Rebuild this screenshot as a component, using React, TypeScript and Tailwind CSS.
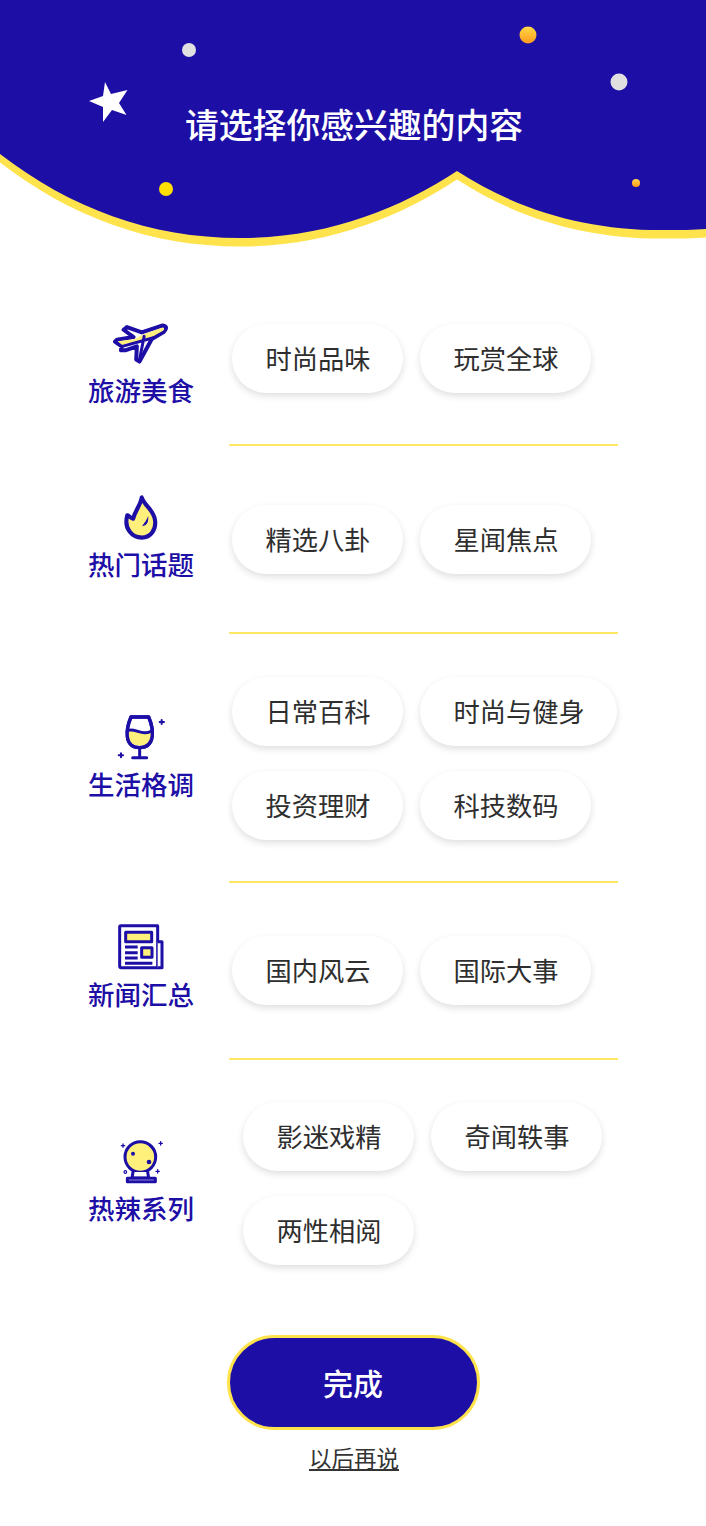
const BLUE = "#1d0ea6";
const YEL = "#fff07c";
const FONT = "font-['Roboto','Noto_Sans_CJK_SC',sans-serif]";

function Plane() {
  return (
    <svg width="57" height="44" viewBox="98 35 172 130" fill="none" stroke={BLUE} strokeWidth="12" strokeLinejoin="round" strokeLinecap="round">
      <path d="M248 47L185 68L140 52L130 60L160 82L110 90L104 96L124 110L122 122L135 122L170 110L168 150L178 156L215 88L252 66Q266 50 248 47Z" fill="#fff" />
      <path d="M246 54L187 75L165 88L112 95L126 106L215 82L250 62Q256 54 246 54Z" fill={YEL} stroke="none" />
      <path d="M126 110L220 84M192 80L178 150" strokeWidth="9" />
    </svg>
  );
}
function Flame() {
  return (
    <svg width="36" height="46" viewBox="133 28 104 134" fill="none" stroke={BLUE} strokeWidth="12" strokeLinejoin="round">
      <path d="M187 38C184 60 168 76 162 100C155 98 150 92 145 90C134 130 160 155 187 155C215 155 229 130 226 105C223 75 197 65 187 38Z" fill={YEL} />
      <path d="M206 92C207 106 205 120 188 122C195 112 201 105 206 92Z" fill={BLUE} stroke="none" />
    </svg>
  );
}
function Glass() {
  return (
    <svg width="48" height="46" viewBox="108 36 144 138" fill="none" stroke={BLUE} strokeWidth="10" strokeLinecap="round" strokeLinejoin="round">
      <path d="M150 45H203C218 80 225 136 176 137C127 136 135 80 150 45Z" fill="#fff" />
      <path d="M142 88C165 80 185 106 212 88C218 118 202 131 176 131C150 131 138 115 142 88Z" fill={YEL} stroke="none" />
      <path d="M150 45H203C218 80 225 136 176 137C127 136 135 80 150 45Z" />
      <path d="M141 85C165 78 185 104 213 86M176 137V165M155 167H197" strokeWidth="9" />
      <path d="M236 60H249M242 54V66M113 160H126M120 154V166" strokeWidth="6" />
    </svg>
  );
}
function News() {
  return (
    <svg width="46" height="46" viewBox="113 26 138 136" fill="none" stroke={BLUE} strokeWidth="9" strokeLinejoin="round">
      <path d="M118 34Q118 30 122 30H232V156H122Q118 156 118 152Z" fill="#fff" />
      <path d="M232 78H245V156H232" fill="#fff" />
      <rect x="136" y="50" width="78" height="28" fill={YEL} />
      <rect x="184" y="96" width="31" height="29" fill={YEL} />
      <path d="M134 94H172M134 111H172M134 127H172M134 143H216" />
    </svg>
  );
}
function Ball() {
  return (
    <svg width="46" height="46" viewBox="110 26 138 136" fill="none" stroke={BLUE} strokeWidth="9" strokeLinejoin="round" strokeLinecap="round">
      <circle cx="177" cy="82" r="46" fill={YEL} />
      <path d="M155 127L152 145H202L199 127" fill="#fff" />
      <path d="M138 146H222V156H138Z" fill="#fff" />
      <circle cx="155" cy="72" r="6" fill={BLUE} stroke="none" />
      <circle cx="203" cy="97" r="7" fill={BLUE} stroke="none" />
      <path d="M204 48L217 62" strokeWidth="4" />
      <path d="M120 48H130M125 43V53M233 41H243M238 36V46M224 125H234M229 120V130" strokeWidth="4" />
      <circle cx="132" cy="127" r="4" strokeWidth="3.5" />
    </svg>
  );
}

function Chip({ text }: { text: string }) {
  return (
    <div className="h-[69px] pt-[5px] pl-[33.5px] pr-[32.5px] rounded-full bg-white shadow-[0_3px_7px_rgba(0,0,0,0.13)] flex items-center text-[26.25px] text-[#2e2e2e] whitespace-nowrap">
      {text}
    </div>
  );
}

function Side({ icon, label, cls }: { icon: React.ReactNode; label: string; cls: string }) {
  return (
    <div className={"w-[229px] pl-[53px] shrink-0 flex justify-center " + cls}>
      <div className="w-[176px] flex flex-col items-center gap-[9px]">
        <div className="h-[46px] flex items-center justify-center">{icon}</div>
        <div className="h-[34px] leading-[34px] text-[26.5px] font-medium text-[#1d0ea6] whitespace-nowrap">{label}</div>
      </div>
    </div>
  );
}

function Divider() {
  return <div className="ml-[229px] w-[389px] h-[2px] bg-[#ffe766]" />;
}

const CURVE = "M0 154C70 208 150 238 240 238C325 238 398 210 457 171C520 212 590 230 660 230C680 230 695 230 706 229V0H0Z";

export default function App() {
  return (
    <div className={"relative w-[706px] h-[1526px] overflow-hidden bg-white " + FONT}>
      <div className="relative h-[245px]">
        <svg className="block" width="706" height="247" viewBox="0 0 706 247">
          <defs>
            <linearGradient id="o" x1="0" y1="0" x2="0" y2="1">
              <stop offset="0" stopColor="#ffd84a" />
              <stop offset="1" stopColor="#ff9a1a" />
            </linearGradient>
          </defs>
          <path transform="translate(0 8.5)" fill="#ffe34d" d={CURVE} />
          <path fill={BLUE} d={CURVE} />
          <circle cx="189" cy="50" r="7" fill="#e0e0e0" />
          <circle cx="619" cy="82" r="8.5" fill="#e0e0e0" />
          <circle cx="528" cy="35" r="8.5" fill="url(#o)" />
          <circle cx="636" cy="183" r="4" fill="url(#o)" />
          <circle cx="166" cy="189" r="7" fill="#ffe000" />
          <path fill="#fff" d="M105 82L111 94L127.5 90L119 103L126.5 115L112 110L103 122L103 107L89 101L103 96Z" />
        </svg>
        <div className="absolute left-[2px] right-0 top-[105px] text-center text-[33.8px] leading-[44px] font-medium text-white">请选择你感兴趣的内容</div>
      </div>

      <div className="pt-[79px] pb-[51px]">
        <div className="flex items-center h-[69px]">
          <Side icon={<Plane />} label="旅游美食" cls="mt-[12px]" />
          <div className="pl-[3px] flex gap-x-[17px]"><Chip text="时尚品味" /><Chip text="玩赏全球" /></div>
        </div>
      </div>
      <Divider />

      <div className="pt-[59px] pb-[58px]">
        <div className="flex items-center h-[69px]">
          <Side icon={<Flame />} label="热门话题" cls="mb-[2px]" />
          <div className="pl-[3px] flex gap-x-[17px]"><Chip text="精选八卦" /><Chip text="星闻焦点" /></div>
        </div>
      </div>
      <Divider />

      <div className="pt-[43px] pb-[41px]">
        <div className="flex items-center">
          <Side icon={<Glass />} label="生活格调" cls="" />
          <div className="pl-[3px] flex flex-wrap w-[420px] gap-x-[17px] gap-y-[25px]">
            <Chip text="日常百科" /><Chip text="时尚与健身" /><Chip text="投资理财" /><Chip text="科技数码" />
          </div>
        </div>
      </div>
      <Divider />

      <div className="pt-[53px] pb-[53px]">
        <div className="flex items-center h-[69px]">
          <Side icon={<News />} label="新闻汇总" cls="mb-[5px]" />
          <div className="pl-[3px] flex gap-x-[17px]"><Chip text="国内风云" /><Chip text="国际大事" /></div>
        </div>
      </div>
      <Divider />

      <div className="pt-[42px]">
        <div className="flex items-center">
          <Side icon={<Ball />} label="热辣系列" cls="mb-[2px]" />
          <div className="pl-[14px] flex flex-wrap w-[420px] gap-x-[17px] gap-y-[25px]">
            <Chip text="影迷戏精" /><Chip text="奇闻轶事" /><Chip text="两性相阅" />
          </div>
        </div>
      </div>

      <div className="mt-[70px] flex flex-col items-center">
        <div className="w-[253px] h-[95px] pt-[4px] rounded-full bg-[#1d0ea6] border-[3px] border-[#ffe34d] flex items-center justify-center text-[30px] font-medium text-white">完成</div>
        <div className="mt-[13px] ml-[2px] text-[22.5px] leading-[32px] text-[#333333] underline">以后再说</div>
      </div>
    </div>
  );
}
